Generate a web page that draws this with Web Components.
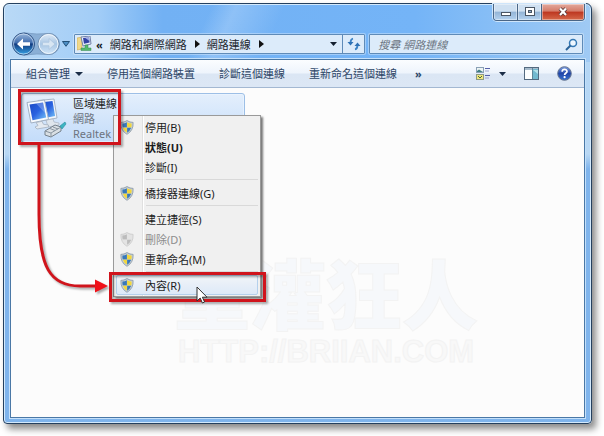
<!DOCTYPE html>
<html lang="zh-Hant">
<head>
<meta charset="utf-8">
<title>網路連線</title>
<style>
    body {
        margin: 0;
        padding: 3px 12px 12px 3px;
        background: #fff;
        color: #1c1c1c;
        font: 11px/15px "Noto Sans", "Noto Sans CJK TC", sans-serif;
    }
</style>
</head>
<body>
<explorer-window>
    <caption-buttons slot="caption"></caption-buttons>
    <nav-bar slot="nav" placeholder="搜尋 網路連線">
        <button>網路和網際網路</button>
        <button>網路連線</button>
    </nav-bar>
    <command-bar slot="commands">
        <command-button menu>組合管理</command-button>
        <command-button>停用這個網路裝置</command-button>
        <command-button>診斷這個連線</command-button>
        <command-button>重新命名這個連線</command-button>
        <command-button more>»</command-button>
    </command-bar>

    <site-watermark>
        <span slot="name">重灌狂人</span>
        <span slot="url">HTTP://BRIIAN.COM</span>
    </site-watermark>
    <connection-tile>
        區域連線
        <span slot="network">網路</span>
        <span slot="device">Realtek</span>
    </connection-tile>
    <context-menu>
        <menu-item shield>停用(B)</menu-item>
        <menu-item default>狀態(U)</menu-item>
        <menu-item>診斷(I)</menu-item>
        <hr>
        <menu-item shield>橋接器連線(G)</menu-item>
        <hr>
        <menu-item>建立捷徑(S)</menu-item>
        <menu-item shield disabled>刪除(D)</menu-item>
        <menu-item shield>重新命名(M)</menu-item>
        <hr>
        <menu-item shield active>內容(R)</menu-item>
    </context-menu>
    <step-marks></step-marks>
</explorer-window>

<script>
// Registers an element whose shadow root is filled from an html string or a function of the host
function define(name, render, ready) {
    customElements.define(name, class extends HTMLElement {
        constructor() {
            super();
            this.attachShadow({ mode: 'open' });
        }
        connectedCallback() {
            this.shadowRoot.innerHTML = typeof render === 'function' ? render(this) : render;
            if (ready) ready(this);
        }
    });
}

const buttonReset = `
    button {
        margin: 0;
        padding: 0;
        border: 0;
        background: none;
        color: inherit;
        font: inherit;
    }
    svg { display: block; }
`;

define('explorer-window', `
    <style>
        :host {
            display: flex;
            flex-direction: column;
            box-sizing: border-box;
            min-height: calc(100vh - 15px);
            padding: 0 6px 5px;
            border: 1px solid #24405f;
            border-radius: 6px 6px 4px 4px;
            background:
                linear-gradient(115deg, #fff0 0 34%, #fff3 38%, #fff0 46%) 0 0 / 100% 58px no-repeat,
                linear-gradient(90deg, #b9d9f6 0, #a2cdf7 16%, #72b1f4 27%, #74b4f7 70%, #85bdf6 82%, #a0caf4 100%) 0 0 / 100% 58px no-repeat,
                linear-gradient(#b4d6f5 58px, #b9d8f4 150px, #7fb4ec 165px, #7fb4ec);
            box-shadow: inset 0 0 0 1px #d3e9fc, 4px 5px 7px #8a8a8a;
        }
        .title {
            display: flex;
            justify-content: flex-end;
            height: 28px;
        }
        .pane {
            display: flex;
            flex: 1;
            flex-direction: column;
            margin-top: 3px;
            border: 1px solid #4a78a6;
            outline: 1px solid #c4e0fa;
            background: #fcfcfc;
        }
        main {
            position: relative;
            flex: 1;
            padding: 5px 10px;
        }
    </style>
    <header>
        <div class="title"><slot name="caption"></slot></div>
        <slot name="nav"></slot>
    </header>
    <div class="pane">
        <slot name="commands"></slot>
        <main><slot></slot></main>
    </div>
`);

define('caption-buttons', `
    <style>
        ${buttonReset}
        :host {
            display: flex;
            height: 16px;
            border: 1px solid #4a6686;
            border-top: 0;
            border-radius: 0 0 4px 4px;
            overflow: hidden;
            box-shadow: 0 0 0 1px #cfe5fa;
        }
        button {
            display: grid;
            place-items: center;
            width: 24px;
            border-right: 1px solid #4a6686;
            background: linear-gradient(#cfe0f1 0 45%, #93b4d6 50%, #b5d2ef);
            box-shadow: inset 0 0 0 1px #fff6;
        }
        .close {
            width: 42px;
            border: 0;
            background: linear-gradient(#e3a99d 0, #d57b69 45%, #bd3620 50%, #d5694a);
        }
    </style>
    <button aria-label="最小化"><svg width="12" height="12"><rect x="1.500" y="6.500" width="9" height="3" fill="#fff" stroke="#4b5664"/></svg></button>
    <button aria-label="最大化"><svg width="12" height="12"><rect x="1.500" y="1.500" width="9" height="8" fill="#fff" stroke="#4b5664"/><rect x="4.500" y="4.500" width="3" height="2" fill="#8fb0d2" stroke="#4b5664"/></svg></button>
    <button class="close" aria-label="關閉"><svg width="12" height="12"><path d="M3 2.500 9 9M9 2.500 3 9" stroke="#5d3a3a" stroke-width="4"/><path d="M3 2.500 9 9M9 2.500 3 9" stroke="#fff" stroke-width="2.200"/></svg></button>
`);

define('nav-bar', host => `
    <style>
        ${buttonReset}
        :host {
            display: flex;
            align-items: center;
            gap: 4px;
            height: 24px;
            padding: 0 2px;
        }
        .box {
            display: flex;
            align-items: center;
            box-sizing: border-box;
            height: 20px;
            border: 1px solid #5f8bb8;
            border-radius: 1px;
            background: #dcebfa;
            box-shadow: 0 0 0 1px #ffffff55;
        }
        .address { flex: 291 0 0; }
        .search { flex: 213 0 0; }
        .path {
            display: flex;
            flex: 1;
            align-items: center;
            padding-left: 2px;
        }
        .path b { padding-left: 4px; color: #161c26; }
        .crumbs { display: flex; }
        .crumb {
            display: flex;
            align-items: center;
            gap: 8px;
            margin-left: 7px;
        }
        .refresh {
            display: grid;
            place-items: center;
            align-self: stretch;
            width: 22px;
            border-left: 1px solid #5f8bb8;
        }
        .drop { padding: 0 5px; }
        .search svg { margin-right: 4px; }
        input {
            flex: 1;
            min-width: 0;
            padding: 0 0 0 8px;
            border: 0;
            outline: 0;
            background: none;
            font: inherit;
        }
        input::placeholder {
            color: #6b7480;
            font-style: italic;
            opacity: 1;
        }
        .travel {
            display: flex;
            align-items: center;
        }
    </style>
    <div class="travel">
        <button aria-label="上一頁 / 下一頁">
            <svg width="50" height="24" viewBox="0 0 50 24">
                <defs>
                    <linearGradient id="b" x2="0" y2="1"><stop stop-color="#9bb9dd"/><stop offset=".45" stop-color="#3f6bac"/><stop offset=".5" stop-color="#123b80"/><stop offset="1" stop-color="#36a5e8"/></linearGradient>
                    <linearGradient id="f" x2="0" y2="1"><stop stop-color="#dfeaf5"/><stop offset=".5" stop-color="#a9c7e5"/><stop offset="1" stop-color="#d2e6f8"/></linearGradient>
                </defs>
                <path d="M12 .800Q25 3 37 1.500a10 10 0 0 1 0 21Q25 21 12 23.200z" fill="#8aafd6" stroke="#7fa2c8"/>
                <circle cx="11.500" cy="12" r="11" fill="url(#b)" stroke="#35588a"/>
                <circle cx="11.500" cy="12" r="10" fill="none" stroke="#d3e4f5" stroke-opacity=".7"/>
                <path d="M5 12l6-5.500v3.700h7v3.600h-7v3.700z" fill="#fff"/>
                <circle cx="36.500" cy="12" r="10.500" fill="url(#f)" stroke="#7593b5"/>
                <circle cx="36.500" cy="12" r="9.500" fill="none" stroke="#f0f7fd"/>
                <path d="M43 12l-6-5.500v3.700h-6.500v3.600H37v3.700z" fill="#d8e6f3" stroke="#b1c9e2"/>
            </svg>
        </button>
        <button aria-label="最近的頁面"><svg width="8" height="6"><path d="M.500.500h7L4 5.300z" fill="#4d8fc6" stroke="#245178"/></svg></button>
    </div>
    <div class="box address">
        <div class="path">
            <svg width="15" height="16" viewBox="0 0 15 16">
                <path d="M0 2l5-1v12l-5 1z" fill="#f0d889" stroke="#c9ab52" stroke-width=".600"/>
                <path d="M4 1l9-1 1 8-8 2z" fill="#e9effa" stroke="#7282a8"/>
                <path d="M6 2l6-.600.600 5-5.600 1.400z" fill="#3342a5"/>
                <path d="M8 1.800l4-.400.400 3.600z" fill="#9caae4"/>
                <path d="M8 9h3v3h3v2.500H4V12h4z" fill="#55b96e" stroke="#37884d" stroke-width=".500"/>
            </svg>
            <b>«</b>
            <div class="crumbs"></div>
        </div>
        <button class="drop" aria-label="先前的位置"><svg width="7" height="4"><path d="M0 0h7L3.500 4z" fill="#14202f"/></svg></button>
        <button class="refresh" aria-label="重新整理"><svg width="14" height="14" viewBox="0 0 14 14"><path d="M6 1.500C4 2 3.500 3.500 3.500 6M8 12.500c2-.500 2.500-2 2.500-4.500" fill="none" stroke="#3b82c4" stroke-width="1.800"/><path d="M.500 5h6l-3 3.500zM7.500 9h6l-3-3.500z" fill="#2f72b5"/></svg></button>
    </div>
    <div class="box search">
        <input type="text" aria-label="${host.getAttribute('placeholder')}" placeholder="${host.getAttribute('placeholder')}">
        <svg width="13" height="13"><circle cx="8" cy="5" r="3.500" fill="#eef7ff" stroke="#3478b4" stroke-width="1.500"/><path d="M5.500 7.500 1 12" stroke="#2b6499" stroke-width="2"/></svg>
    </div>
`, host => {
    const crumbs = host.shadowRoot.querySelector('.crumbs');
    const arrow = '<svg width="5" height="8"><path d="M0 0v8l5-4z" fill="#111"/></svg>';
    // give every crumb its own slot so an arrow can follow it
    [...host.children].forEach((child, i) => {
        child.slot = 'crumb' + i;
        child.style.cssText = 'margin:0;padding:0;border:0;background:none;color:#20242c;font:inherit';
        crumbs.insertAdjacentHTML('beforeend', `<div class="crumb"><slot name="crumb${i}"></slot>${arrow}</div>`);
    });
});

define('command-bar', `
    <style>
        ${buttonReset}
        :host {
            display: flex;
            align-items: center;
            height: 27px;
            padding: 0 12px 0 3px;
            border-bottom: 1px solid #a3b8d2;
            background: linear-gradient(#fbfdff, #eef4fc 48%, #dbe6f4 52%, #dce7f5);
            color: #2d4566;
        }
        .tools {
            display: flex;
            align-items: center;
            gap: 18px;
            margin-left: auto;
        }
        .view { display: flex; align-items: center; gap: 8px; }
    </style>
    <slot></slot>
    <div class="tools">
        <button class="view" aria-label="變更檢視">
            <svg width="15" height="14"><rect x=".500" y=".500" width="7" height="5" fill="#eef5f4" stroke="#8aa0b5"/><path d="M1 4l2-1.500L7 5H1z" fill="#3f7e83"/><rect x=".500" y="7.500" width="7" height="5" fill="#f0e77c" stroke="#8f9a85"/><path d="M2 9l2 2 2-2" stroke="#48653a" fill="none"/><path d="M9 1.500h5M9 8.500h5" stroke="#5560a8"/><path d="M9 4h4M9 11h4" stroke="#9ea6cf"/></svg>
            <svg width="7" height="4"><path d="M0 0h7L3.500 4z" fill="#1b2d47"/></svg>
        </button>
        <button aria-label="顯示預覽窗格"><svg width="15" height="13"><rect x=".500" y=".500" width="14" height="12" fill="#fdfefe" stroke="#546a7f"/><path d="M1 2h13" stroke="#a7bccd" stroke-width="2"/><rect x="9" y="2" width="5" height="10" fill="#72b9cf"/><path d="M9 3h5v4z" fill="#b5e2ea"/><path d="M8.500 1v11" stroke="#5f8698"/></svg></button>
        <button aria-label="取得說明">
            <svg width="15" height="15"><defs><linearGradient id="h" x2="0" y2="1"><stop stop-color="#7b9fe4"/><stop offset=".5" stop-color="#2146a8"/><stop offset="1" stop-color="#3672cf"/></linearGradient></defs><circle cx="7.500" cy="7.500" r="6.800" fill="url(#h)" stroke="#65748f"/><path d="M5.200 5.800C5 2.600 10 2.600 10 5.400 10 7 7.600 7 7.600 9" fill="none" stroke="#fff" stroke-width="1.700"/><circle cx="7.600" cy="11.200" r="1.100" fill="#fff"/></svg>
        </button>
    </div>
`);

define('command-button', host => `
    <style>
        ${buttonReset}
        :host { display: block; }
        button {
            display: flex;
            align-items: center;
            gap: 5px;
            padding: 0 12px;
            white-space: nowrap;
        }
        :host([more]) button {
            padding: 0 6px;
            font-weight: bold;
        }
    </style>
    <button>
        <slot></slot>
        ${host.hasAttribute('menu') ? '<svg width="8" height="4"><path d="M0 0h8L4 4z" fill="#1b2d47"/></svg>' : ''}
    </button>
`);

define('connection-tile', `
    <style>
        :host {
            display: grid;
            grid-template-columns: 42px 1fr;
            align-items: center;
            gap: 5px;
            box-sizing: border-box;
            position: relative;
            width: 224px;
            height: 50px;
            padding: 0 4px;
            border: 1px solid #9dbfe6;
            border-radius: 3px;
            background: linear-gradient(#e4effc, #c3dcfa);
            box-shadow: inset 0 0 0 1px #eef6ff99;
        }
        svg { display: block; }
        .info { display: flex; flex-direction: column; }
        .sub { color: #6d7480; }
    </style>
    <svg width="42" height="42" viewBox="0 0 42 42">
        <defs><linearGradient id="s" x2="1" y2="1"><stop stop-color="#1b49c4"/><stop offset=".5" stop-color="#2a62e0"/><stop offset="1" stop-color="#78c5f8"/></linearGradient></defs>
        <path d="M12 3.500 28 2l3 19-16 3z" fill="#f2f6fb" stroke="#a8b6c8"/>
        <path d="M14 5.500 26.500 4l2.600 15-13 2.500z" fill="url(#s)"/>
        <path d="M20 23l7-1 1 3 5 1v2l-11 2z" fill="#dfe6ed" stroke="#aab5c2" stroke-width=".700"/>
        <path d="M1 5.500 18.500 3l4 19.500L5 26z" fill="#f7fafd" stroke="#a2b1c4"/>
        <path d="M3.500 7.500 17 5.500l3.200 15L6.500 23.200z" fill="url(#s)"/>
        <path d="M10 6.500 17 5.500l2.500 11z" fill="#fff" opacity=".250"/>
        <path d="M10 25.500l6-1.200 1.500 3 5 .700v2L11 32l-2-2 3-1.500z" fill="#e5eaf0" stroke="#a5b0be" stroke-width=".800"/>
        <path d="M19 34l10-6 6 2v4l-10 6-6-2z" fill="#d9dfe4" stroke="#75818c"/>
        <path d="M19 34l6 2 10-6M25 36v4M27 30l5 2M24 31.500l5 2" fill="none" stroke="#8a96a1"/>
        <path d="M34 29l5-4 1 2-4 5z" fill="#3cb5c2" stroke="#278c9c" stroke-width=".600"/>
    </svg>
    <div class="info">
        <div><slot></slot></div>
        <div class="sub"><slot name="network"></slot></div>
        <div class="sub"><slot name="device"></slot></div>
    </div>
`);

define('shield-icon', `
    <style>
        :host { display: block; }
        svg { display: block; }
    </style>
    <svg width="14" height="15" viewBox="0 0 14 15">
        <path d="M7 .600Q4 2.500.900 2.400.400 10.500 7 14.300 13.600 10.500 13.100 2.400 10 2.500 7 .600z" fill="#c9d2da" stroke="#8493a0" stroke-width=".800"/>
        <path d="M6.900 2.200Q5 3.400 2.400 3.600q-.200 2 .300 3.900h4.200z" fill="#3978b8"/>
        <path d="M7.100 2.200Q9 3.400 11.600 3.600q.200 2-.300 3.900H7.100z" fill="#f3d73a"/>
        <path d="M6.900 7.700H2.800q1.200 3.300 4.100 5.100z" fill="#f3d73a"/>
        <path d="M7.100 7.700h4.100q-1.200 3.300-4.100 5.100z" fill="#3978b8"/>
    </svg>
`);

define('menu-item', host => `
    <style>
        ${buttonReset}
        :host { display: block; }
        button {
            display: grid;
            grid-template-columns: 14px 1fr;
            align-items: center;
            gap: 11px;
            box-sizing: border-box;
            width: 100%;
            height: 20px;
            padding: 0 3px;
            border: 1px solid transparent;
            border-radius: 2px;
            text-align: left;
        }
        span { grid-column: 2; }
        :host([default]) { font-weight: bold; }
        :host([active]) button {
            border-color: #b4d0ec;
            background: linear-gradient(#f1f4f8, #dde9f8);
        }
        button:disabled { color: #8d8d8d; }
        button:disabled shield-icon { filter: grayscale(1); opacity: .4; }
    </style>
    <button role="menuitem" ${host.hasAttribute('disabled') ? 'disabled' : ''}>
        ${host.hasAttribute('shield') ? '<shield-icon></shield-icon>' : ''}
        <span><slot></slot></span>
    </button>
`);

define('context-menu', `
    <style>
        :host {
            position: absolute;
            left: 102px;
            top: 27px;
            box-sizing: border-box;
            width: 148px;
            padding: 1px 2px;
            border: 1px solid #9a9a9a;
            background: linear-gradient(90deg, #f0f0f0 28px, #e0e0e0 28px 29px, #fff 29px 30px, #f0f0f0 30px);
            box-shadow: 2px 2px 2px #777;
        }
        ::slotted(hr) {
            height: 1px;
            margin: 2px 0 3px 30px;
            border: 0;
            background: #d9d9d9;
        }
    </style>
    <div role="menu"><slot></slot></div>
`);

define('site-watermark', `
    <style>
        :host {
            position: absolute;
            left: 163px;
            top: 166px;
            color: #f8f8f8;
            font-weight: 900;
            white-space: nowrap;
            -webkit-text-stroke: 1px #f3f3f3;
        }
        .name {
            color: #f6f8fb;
            font-size: 76px;
            line-height: 82px;
        }
        .url {
            padding-left: 4px;
            font: bold 31px/32px "Liberation Sans", sans-serif;
        }
    </style>
    <div class="name"><slot name="name"></slot></div>
    <div class="url"><slot name="url"></slot></div>
`);

// red frames, the arrow between them and the mouse pointer
define('step-marks', `
    <style>
        :host {
            position: absolute;
            left: 0;
            top: 0;
            pointer-events: none;
        }
        svg { display: block; overflow: visible; }
        .red { filter: drop-shadow(2px 2px 1px #0005); }
    </style>
    <svg width="260" height="220">
        <g class="red" fill="none" stroke="#d0141c" stroke-width="3">
            <rect x="8.500" y="2.500" width="100" height="53"/>
            <rect x="99.500" y="185.500" width="154" height="27"/>
            <path d="M28 57V126C28 179 39 198 69 198H86"/>
            <path d="M84 191.500 97 198 84 204.500z" fill="#f01018" stroke="none"/>
        </g>
        <path d="M186 199v14l3.200-3 2.200 5 2.200-1-2.200-4.800h4.600z" fill="#fff" stroke="#333"/>
    </svg>
`);
</script>
</body>
</html>
